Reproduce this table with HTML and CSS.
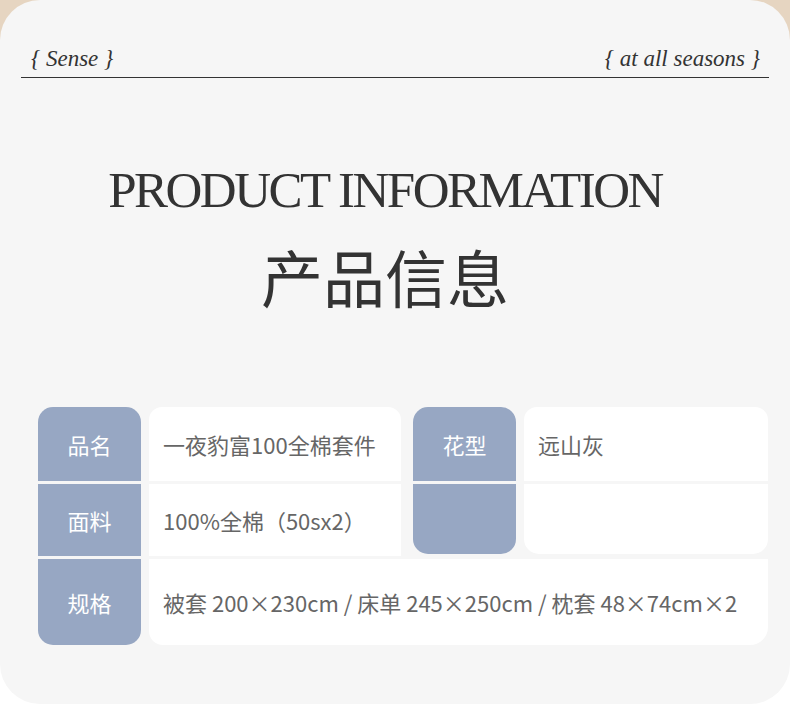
FILE: index.html
```html
<!DOCTYPE html>
<html lang="zh-CN">
<head>
    <meta charset="UTF-8">
    <meta name="viewport" content="width=device-width, initial-scale=1.0">
    <title>产品信息</title>
    <link rel="stylesheet" href="styles.css">
</head>
<body>

    <div class="page">
        <div class="card">
            <div class="top-bar">
                <span>{ Sense }</span>
                <span>{ at all seasons }</span>
            </div>

            <div class="title">
                <h1>PRODUCT INFORMATION</h1>
                <h2>产品信息</h2>
            </div>

            <div class="info-table">
                <div class="label first">品名</div>
                <div class="value first left">一夜豹富100全棉套件</div>
                <div class="label first">花型</div>
                <div class="value first">远山灰</div>

                <div class="label">面料</div>
                <div class="value left">100%全棉（50sx2）</div>
                <div class="label last short"></div>
                <div class="value last short"></div>

                <div class="label last">规格</div>
                <div class="value wide last">被套 200×230cm / 床单 245×250cm / 枕套 48×74cm×2</div>
            </div>
        </div>
    </div>

</body>
</html>
```

FILE: styles.css
```css
body {
    margin: 0;
    padding: 0;
    background: #fff;
}
.page {
    width: 790px;
    height: 727px;
    background: linear-gradient(#e6d5c1 0, #e6d5c1 120px, #fff 120px);
}
.card {
    height: 704px;
    background: #f6f6f6;
    border-radius: 40px;
    padding-top: 43px;
    box-sizing: border-box;
}
.top-bar {
    display: flex;
    justify-content: space-between;
    margin: 0 21px;
    padding: 0 9px 3px 10px;
    border-bottom: 1px solid #333;
    font-family: 'Liberation Serif', serif;
    font-style: italic;
    font-size: 23px;
    line-height: 31px;
    color: #333;
}
.title {
    text-align: center;
    padding-right: 20px;
    color: #333;
}
.title h1 {
    margin: 85px 0 0;
    font-family: 'Liberation Serif', serif;
    font-weight: normal;
    font-size: 51px;
    line-height: 54px;
    letter-spacing: -2.5px;
}
.title h2 {
    margin: 28px 0 0;
    font-family: 'Noto Sans CJK SC', sans-serif;
    font-weight: 400;
    font-size: 62px;
    line-height: 62px;
}
.info-table {
    display: grid;
    grid-template-columns: 103px 256px 103px 244px;
    grid-template-rows: 74px 72px 86px;
    column-gap: 8px;
    row-gap: 3px;
    margin: 100px 0 0 38px;
    font-family: 'Noto Sans CJK SC', sans-serif;
}
.label {
    display: flex;
    align-items: center;
    justify-content: center;
    background: #97a7c3;
    color: #fff;
    font-size: 22px;
}
.value {
    display: flex;
    align-items: center;
    padding-left: 14px;
    background: #fff;
    color: #666;
    font-size: 22px;
}
.value.left {
    margin-right: 4px;
}
.value.wide {
    grid-column: 2 / 5;
}
.label.first {
    border-radius: 15px 15px 0 0;
}
.value.first {
    border-radius: 13px 13px 0 0;
}
.label.last {
    border-radius: 0 0 15px 15px;
}
.value.last {
    border-radius: 0 0 18px 14px;
}
.short {
    margin-bottom: 2px;
}
.value.short {
    border-radius: 0 0 15px 15px;
}
```
